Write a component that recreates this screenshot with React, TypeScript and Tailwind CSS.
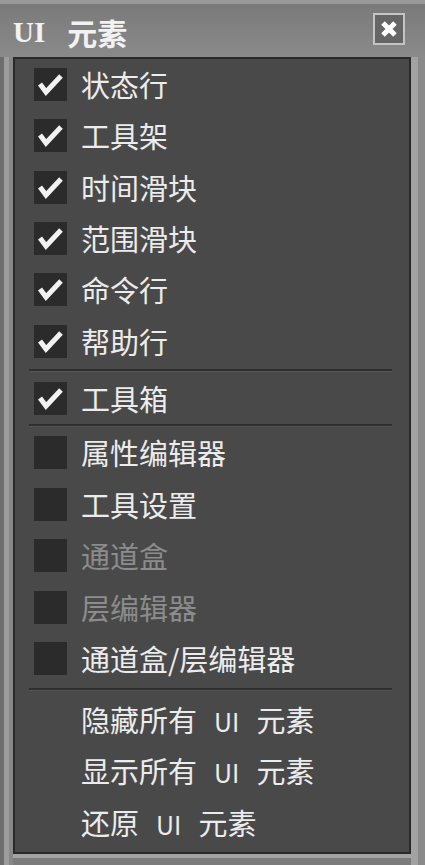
import React from 'react';

const FONT = { fontFamily: '"Noto Sans CJK SC", "Noto Sans", sans-serif' };

type Item = { label: React.ReactNode; checked?: boolean; disabled?: boolean; box?: boolean };

function CheckBox({ checked }: { checked?: boolean }) {
    return (
        <div className="w-[33px] h-[33px] bg-[#2b2b2b] shrink-0 flex items-center justify-center">
            {checked && (
                <svg width="33" height="33" viewBox="0 0 33 33">
                    <path d="M6 16 L12 24 L27 8" fill="none" stroke="#f2f2f2" strokeWidth="5" strokeLinejoin="miter" />
                </svg>
            )}
        </div>
    );
}

function Row({ item }: { item: Item }) {
    return (
        <div className="h-[51.5px] flex items-center pl-[19px]">
            {item.box !== false ? <CheckBox checked={item.checked} /> : <div className="w-[33px] shrink-0" />}
            <span
                className={`ml-[14px] text-[29px] leading-none ${item.disabled ? 'text-[#8c8c8c]' : 'text-[#ececec]'}`}
            >
                {item.label}
            </span>
        </div>
    );
}

function Separator({ className = '' }: { className?: string }) {
    return <div className={`ml-[14px] mr-[17px] h-[3px] border-t-2 border-[#2e2e2e] border-b border-b-[#555] ${className}`} />;
}

const UI = () => <span className="mx-[17px] text-[25px]">UI</span>;

export default function App() {
    const groupA: Item[] = [
        { label: '状态行', checked: true },
        { label: '工具架', checked: true },
        { label: '时间滑块', checked: true },
        { label: '范围滑块', checked: true },
        { label: '命令行', checked: true },
        { label: '帮助行', checked: true },
    ];
    const groupB: Item[] = [
        { label: '属性编辑器' },
        { label: '工具设置' },
        { label: '通道盒', disabled: true },
        { label: '层编辑器', disabled: true },
        { label: '通道盒/层编辑器' },
    ];
    const groupC: Item[] = [
        { label: <>隐藏所有<UI />元素</>, box: false },
        { label: <>显示所有<UI />元素</>, box: false },
        { label: <>还原<UI />元素</>, box: false },
    ];

    return (
        <div className="w-[425px] h-[865px] bg-[#7c7c7c] flex flex-col" style={FONT}>
            {/* title bar */}
            <div className="h-[57px] shrink-0 flex items-center justify-between pl-[13px] pr-[20px] border-t-[4px] border-[#9a9a9a] bg-gradient-to-b from-[#7a7a7a] to-[#8a8a8a]">
                <div className="flex items-center text-[#f2f2f2] font-bold pt-[4px]">
                    <span className="text-[29px]" style={{ fontFamily: '"Liberation Serif", serif' }}>UI</span>
                    <span className="ml-[22px] text-[30px]">元素</span>
                </div>
                <div className="w-[32px] h-[32px] border-2 border-[#c4c4c4] bg-[#656565] flex items-center justify-center mt-[-4px]">
                    <svg width="18" height="18" viewBox="0 0 18 18">
                        <path d="M3 3 L15 15 M15 3 L3 15" stroke="#fff" strokeWidth="5" />
                    </svg>
                </div>
            </div>

            {/* body with side frames */}
            <div className="flex flex-1 min-h-0">
                <div className="w-[13px] flex shrink-0">
                    <div className="w-[4px] bg-[#6e6e6e]" />
                    <div className="w-[5px] bg-[#9c9c9c]" />
                    <div className="w-[4px] bg-[#888]" />
                </div>
                <div className="flex-1 flex flex-col">
                    <div className="h-[797px] border-2 border-[#2a2a2a] bg-[#494949] flex flex-col">
                        <div className="h-[308px] flex flex-col">
                            {groupA.map((it, i) => (
                                <Row key={i} item={it} />
                            ))}
                        </div>
                        <Separator className="mt-[2px]" />
                        <div className="h-[52px] flex items-center pl-[19px]">
                            <CheckBox checked />
                            <span className="ml-[14px] text-[29px] leading-none text-[#ececec]">工具箱</span>
                        </div>
                        <Separator />
                        {groupB.map((it, i) => (
                            <Row key={i} item={it} />
                        ))}
                        <Separator className="mt-[3px]" />
                        <div className="mt-[3px]">
                            {groupC.map((it, i) => (
                                <Row key={i} item={it} />
                            ))}
                        </div>
                    </div>
                    <div className="h-[4px] bg-[#a4a4a4]" />
                </div>
                <div className="w-[14px] flex shrink-0">
                    <div className="w-[7px] bg-[#a2a2a2]" />
                    <div className="w-[7px] bg-[#8a8a8a]" />
                </div>
            </div>
        </div>
    );
}
